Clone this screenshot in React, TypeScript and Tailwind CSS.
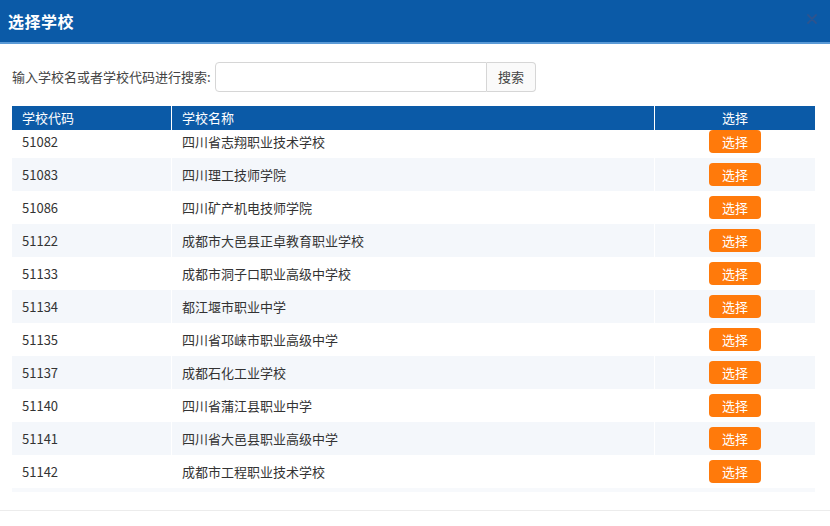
import React from 'react'

const SCHOOLS = [
  { code: '51082', name: '四川省志翔职业技术学校' },
  { code: '51083', name: '四川理工技师学院' },
  { code: '51086', name: '四川矿产机电技师学院' },
  { code: '51122', name: '成都市大邑县正卓教育职业学校' },
  { code: '51133', name: '成都市洞子口职业高级中学校' },
  { code: '51134', name: '都江堰市职业中学' },
  { code: '51135', name: '四川省邛崃市职业高级中学' },
  { code: '51137', name: '成都石化工业学校' },
  { code: '51140', name: '四川省蒲江县职业中学' },
  { code: '51141', name: '四川省大邑县职业高级中学' },
  { code: '51142', name: '成都市工程职业技术学校' },
]

const font = { fontFamily: '"Noto Sans CJK SC", "Noto Sans", sans-serif' }

export default function App() {
  return (
    <div className="w-[830px] h-[526px] bg-white overflow-hidden flex flex-col text-[#333]" style={font}>
      {/* 标题栏 */}
      <div className="h-[44px] bg-[#0b5aa7] border-b-2 border-[#5a9ad6] flex items-center justify-between pl-[8px] pr-[13px] shrink-0">
        <span className="text-white text-[16px] font-bold tracking-[0.5px]">选择学校</span>
        <svg width="10" height="10" viewBox="0 0 10 10" className="mt-[-4px]">
          <path d="M1 1 L9 9 M9 1 L1 9" stroke="#2c548f" strokeWidth="1.8" strokeLinecap="round" />
        </svg>
      </div>

      {/* 搜索 */}
      <div className="flex items-center pl-[12px] pt-[18px] pb-[14px]">
        <span className="text-[13px] text-[#444] w-[203px]">输入学校名或者学校代码进行搜索:</span>
        <input className="w-[272px] h-[30px] border border-[#d6d6d6] rounded-l-[4px] outline-none px-2 text-[13px]" />
        <button className="w-[49px] h-[30px] border border-l-0 border-[#d6d6d6] rounded-r-[4px] bg-[#fafafa] text-[13px] text-[#444]">搜索</button>
      </div>

      {/* 表格 */}
      <div className="mx-[12px] w-[803px]">
        <div className="flex h-[24px] bg-[#0b5aa7] text-white text-[13px]">
          <div className="w-[160px] border-r border-white flex items-center pl-[10px]">学校代码</div>
          <div className="w-[483px] border-r border-white flex items-center pl-[10px]">学校名称</div>
          <div className="flex-1 flex items-center justify-center">选择</div>
        </div>
        {SCHOOLS.map((s, i) => (
          <div
            key={s.code}
            className={`flex text-[13px] ${i === 0 ? 'h-[28px] pb-[5px]' : 'h-[33px]'} ${i % 2 === 1 ? 'bg-[#f4f7fb]' : 'bg-white'}`}
          >
            <div className="w-[160px] border-r border-white flex items-center pl-[10px]">{s.code}</div>
            <div className="w-[483px] border-r border-white flex items-center pl-[10px]">{s.name}</div>
            <div className="flex-1 flex items-center justify-center">
              <button className="w-[52px] h-[23px] rounded-[4px] bg-[#ff7a0b] text-white text-[13px] leading-none">选择</button>
            </div>
          </div>
        ))}
        <div className="h-[4px] bg-[#f7f9fc]" />
      </div>

      <div className="flex-1" />
      <div className="h-[16px] border-t border-[#ececec] shrink-0" />
    </div>
  )
}
